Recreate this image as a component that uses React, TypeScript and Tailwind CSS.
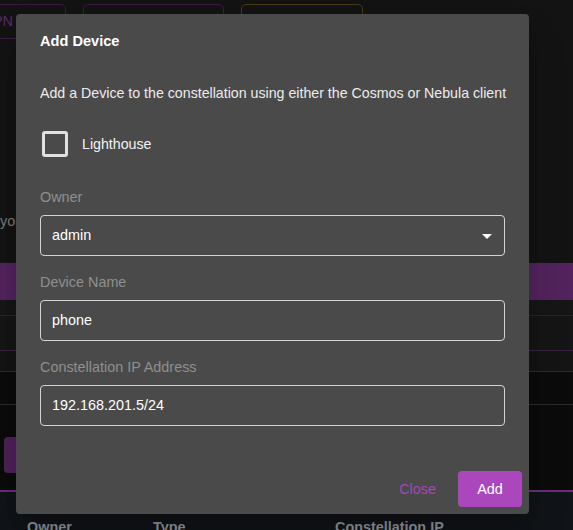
import React from "react";

function Field({
  label,
  value,
  select,
  className,
}: {
  label: string;
  value: string;
  select?: boolean;
  className?: string;
}) {
  return (
    <div className={className}>
      <div className="text-[14.4px] leading-5 text-[#8f8f8f]">{label}</div>
      <div className="mt-2 flex h-[41px] items-center justify-between rounded-[4px] border border-[#d4d4d4] pl-[11px] pr-[5px] pt-px">
        <span className="text-[14.4px] text-white">{value}</span>
        {select && (
          <svg width="24" height="24" viewBox="0 0 24 24" className="text-white">
            <path d="M7 10l5 5 5-5z" fill="currentColor" />
          </svg>
        )}
      </div>
    </div>
  );
}

export default function App() {
  return (
    <div className="relative h-[530px] w-[573px] overflow-hidden bg-[#131313] font-['Liberation_Sans',Arial,sans-serif]">
      {/* page behind the dialog */}
      <div className="flex h-[263px] flex-col">
        <div className="mt-[4px] flex gap-[17px]">
          <div className="-ml-[40px] flex h-[35px] w-[106px] items-center justify-end rounded-[5px] border border-[#3a1a42] pr-[52px] text-[14.4px] text-[#5a2a66]">
            PN
          </div>
          <div className="h-[35px] w-[141px] rounded-[5px] border border-[#3a1a42]" />
          <div className="h-[35px] w-[122px] rounded-[5px] border border-[#47390f]" />
        </div>
        <div className="mt-[172px] text-[14.4px] leading-5 text-[#7a7a7a]">you</div>
      </div>
      <div className="h-[37px] bg-[#52235c]" />
      <div className="h-[16px] border-b border-[#2e1d33] bg-[#161616]" />
      <div className="h-[35px] border-b border-[#3a2141] bg-[#151515]" />
      <div className="h-[21px] border-b border-[#2c2c2c] bg-[#141414]" />
      <div className="h-[33px] border-b border-[#2c2c2c] bg-[#0b0b0b]" />
      <div className="h-[85px] bg-[#0b0b0b] pl-[4px] pt-[32px]">
        <div className="h-[36px] w-[60px] rounded-[4px] bg-[#4d2158]" />
      </div>
      <div className="h-[2px] bg-[#6b2d7a]" />
      <div className="flex h-[40px] bg-[#101317] pl-[27px] pt-[25px] text-[14.4px] font-bold leading-5 text-[#8b9096]">
        <span className="w-[126px]">Owner</span>
        <span className="w-[182px]">Type</span>
        <span>Constellation IP</span>
      </div>

      {/* dialog */}
      <div className="absolute left-[16px] top-[14px] flex h-[500px] w-[513px] flex-col rounded-[4px] bg-[#4a4a4a] shadow-[0_11px_15px_-7px_rgba(0,0,0,0.2),0_24px_38px_3px_rgba(0,0,0,0.14)]">
        <h2 className="px-6 pt-[17px] text-[14.6px] font-bold leading-5 text-white">Add Device</h2>
        <div className="px-6 pt-[32px]">
          <p className="whitespace-nowrap text-[14.2px] leading-5 text-[#ececec]">
            Add a Device to the constellation using either the Cosmos or Nebula client
          </p>
          <label className="ml-[2px] mt-[28px] flex items-center gap-[14px]">
            <span className="h-[26px] w-[26px] rounded-[3px] border-[3px] border-[#e0e0e0]" />
            <span className="pt-[2px] text-[14.2px] text-[#f2f2f2]">Lighthouse</span>
          </label>
          <Field className="mt-[30px]" label="Owner" value="admin" select />
          <Field className="mt-[16px]" label="Device Name" value="phone" />
          <Field className="mt-[16px]" label="Constellation IP Address" value="192.168.201.5/24" />
        </div>
        <div className="mt-auto flex items-center justify-end gap-[14px] pb-[7px] pr-[7px]">
          <button className="h-[36px] px-2 pt-[2px] text-[14.4px] text-[#a646ba]">Close</button>
          <button className="h-[36px] w-[64px] rounded-[4px] bg-[#ab47bc] pt-[1px] text-[14.4px] text-white">Add</button>
        </div>
      </div>
    </div>
  );
}
